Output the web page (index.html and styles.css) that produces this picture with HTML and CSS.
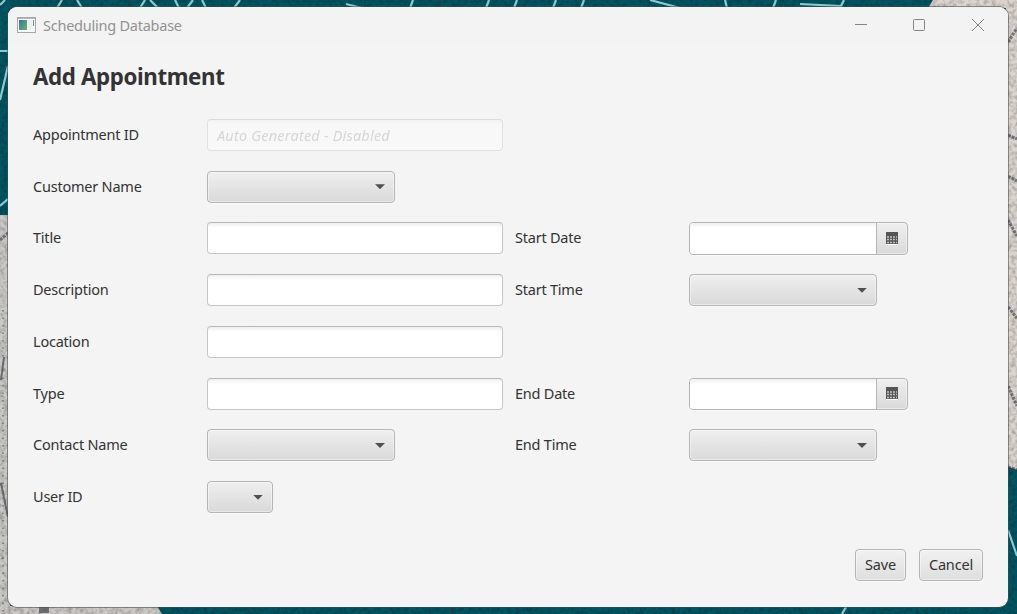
FILE: index.html
```html
<!DOCTYPE html>
<html lang="en">
<head>
<meta charset="utf-8">
<title>Scheduling Database</title>
<link rel="stylesheet" href="styles.css">
</head>
<body>
<svg class="wallpaper" viewBox="0 0 1017 614" aria-hidden="true">
  <defs>
    <filter id="grain" x="0" y="0" width="100%" height="100%">
      <feTurbulence type="fractalNoise" baseFrequency="0.25" numOctaves="3" seed="4" result="n"/>
      <feColorMatrix in="n" type="matrix" values="0 0 0 0 0  0 0 0 0 0  0 0 0 0 0  1.4 0.8 0 0 -0.9"/>
    </filter>
  </defs>
  <rect width="1017" height="614" fill="#005563"/>
  <path d="M0 215H10V614H0Z" fill="#cbc9c6"/>
  <path d="M0 606H157L162 614H0Z" fill="#cbc8c5"/>
  <path d="M933 0H1017V470L1006 466V8H928Z" fill="#dbd4cf"/>
  <rect width="1017" height="614" filter="url(#grain)" opacity=".3"/>
  <g fill="none" stroke="#8fc9cb" stroke-width="2.2">
    <path d="M0 51H8M8 66L0 100M8 199L0 206M5 0L0 5"/>
    <path d="M57 8L62 0M77 0L82 8M140 8L145 0M150 0L158 8M175 0L179 8M187 8L193 0M202 0L206 8M234 8L240 0"/>
    <path d="M346 4L362 8M410 8L413 0M486 8L489 0M514 8L517 0M553 8L556 0M581 8L584 0M650 0L680 8M725 0L727 8M773 8L776 0M800 4L841 6L844 0"/>
    <path d="M1008 530L1017 556M846 607L842 614"/>
  </g>
  <g fill="none" stroke="#303640" stroke-width="3" opacity=".6">
    <path d="M0 240L8 233M1008 42L1017 28M1008 135L1017 139M1008 176L1017 181M1008 220L1017 236M1008 307L1017 318M1008 386L1017 406M1008 467L1017 470" stroke-dasharray="3 1"/>
    <path d="M4 357L1 380M1 483L8 517M441 0L438 8M129 0L131 8M452 607V614" stroke-width="2"/>
    <path d="M39 610H49" stroke-width="6"/>
    <path d="M3 310V614" stroke-width="1.4" stroke-dasharray="1.5 6"/>
  </g>
</svg>

<div class="window">
  <header class="titlebar">
    <svg class="app-icon" width="19" height="16" viewBox="0 0 19 16">
      <defs>
        <linearGradient id="pane" x1="0" y1="0" x2="1" y2="1"><stop offset="0" stop-color="#3e73a0"/><stop offset="1" stop-color="#5dba6a"/></linearGradient>
      </defs>
      <rect x=".5" y=".5" width="18" height="15" fill="#fafafa" stroke="#a3a7b0"/>
      <path d="M1 1.5H18" stroke="#b2b6bf"/>
      <rect x="2" y="3" width="8" height="10" fill="url(#pane)"/>
      <rect x="11" y="3" width="4" height="10" fill="#eeeeee"/>
      <path d="M16 3H17V9H16Z" fill="#5a9c90"/>
    </svg>
    <span class="window-title">Scheduling Database</span>
    <svg class="window-controls" width="131" height="14" viewBox="0 0 131 14">
      <path d="M0 6.5H12"/>
      <rect x="58.5" y="1.5" width="11" height="11" rx="1"/>
      <path d="M117 1L129 13M129 1L117 13"/>
    </svg>
  </header>

  <main class="content">
    <h1 class="heading">Add Appointment</h1>
    <form class="form">
      <label class="c1 r1">Appointment ID</label>
      <input class="field disabled c2 r1" placeholder="Auto Generated - Disabled" disabled>
      <label class="c1 r2">Customer Name</label>
      <div class="combo c2 r2"><i class="arrow"></i></div>
      <label class="c1 r3">Title</label>
      <input class="field c2 r3">
      <label class="c3 r3">Start Date</label>
      <div class="date c4 r3"><input class="date-input"><span class="date-button"><svg class="calendar" width="12" height="13" viewBox="0 0 12 13"><path d="M0 12H12V13H0Z" fill="#fff"/><path d="M0 0H12V12H0Z" fill="#555"/><path d="M1 5H11M1 7.5H11M1 10.5H11" stroke="#c2c2c2" stroke-width="1.6" stroke-dasharray="2 1"/></svg></span></div>
      <label class="c1 r4">Description</label>
      <input class="field c2 r4">
      <label class="c3 r4">Start Time</label>
      <div class="combo c4 r4"><i class="arrow"></i></div>
      <label class="c1 r5">Location</label>
      <input class="field c2 r5">
      <label class="c1 r6">Type</label>
      <input class="field c2 r6">
      <label class="c3 r6">End Date</label>
      <div class="date c4 r6"><input class="date-input"><span class="date-button"><svg class="calendar" width="12" height="13" viewBox="0 0 12 13"><path d="M0 12H12V13H0Z" fill="#fff"/><path d="M0 0H12V12H0Z" fill="#555"/><path d="M1 5H11M1 7.5H11M1 10.5H11" stroke="#c2c2c2" stroke-width="1.6" stroke-dasharray="2 1"/></svg></span></div>
      <label class="c1 r7">Contact Name</label>
      <div class="combo c2 r7"><i class="arrow"></i></div>
      <label class="c3 r7">End Time</label>
      <div class="combo c4 r7"><i class="arrow"></i></div>
      <label class="c1 r8">User ID</label>
      <div class="combo small c2 r8"><i class="arrow"></i></div>
    </form>
    <footer class="actions">
      <button class="button save">Save</button>
      <button class="button cancel">Cancel</button>
    </footer>
  </main>
</div>
</body>
</html>
```

FILE: styles.css
```css
* { box-sizing: border-box; }
body {
  margin: 0;
  width: 1017px;
  height: 614px;
  overflow: hidden;
  padding: 7px 9px 7px 8px;
  font-family: "Noto Sans", "Open Sans", sans-serif;
  font-size: 14.5px;
  color: #333;
}
.wallpaper { position: absolute; left: 0; top: 0; width: 1017px; height: 614px; z-index: -1; }
.window {
  width: 1000px;
  height: 600px;
  background: #f4f4f4;
  border-radius: 9px;
  box-shadow: 0 0 0 1px rgba(70, 75, 75, .55);
  overflow: hidden;
  display: flex;
  flex-direction: column;
}
.titlebar {
  height: 37px;
  flex: none;
  background: #f3f3f3;
  display: flex;
  align-items: center;
  padding: 0 22px 0 9px;
}
.app-icon { display: block; margin-top: -1px; }
.window-title { margin: -2px 0 0 7px; color: #929292; letter-spacing: -.24px; white-space: nowrap; }
.window-controls { margin: -1px 0 0 auto; fill: none; stroke: #858585; stroke-width: 1; }
.content { flex: 1; display: flex; flex-direction: column; padding: 0 25px; }
.heading { margin: 17px 0 0; height: 32px; line-height: 32px; font-size: 22.3px; font-weight: 700; letter-spacing: -.37px; }
.form {
  margin: 25.9px 0 0;
  display: grid;
  grid-template-columns: 174px 308px 174px 219px;
  grid-template-rows: repeat(8, 32px);
  row-gap: 19.75px;
}
label { line-height: 31px; white-space: nowrap; letter-spacing: -.22px; }
.c1 { grid-column: 1; } .c2 { grid-column: 2; } .c3 { grid-column: 3; } .c4 { grid-column: 4; }
.r1 { grid-row: 1; } .r2 { grid-row: 2; } .r3 { grid-row: 3; } .r4 { grid-row: 4; }
.r5 { grid-row: 5; } .r6 { grid-row: 6; } .r7 { grid-row: 7; } .r8 { grid-row: 8; }
.field {
  width: 296px;
  height: 32px;
  border: 1px solid #c6c6c6;
  border-top-color: #b6b6b6;
  border-radius: 4px;
  padding: 0 9px;
  background: linear-gradient(#efefef, #fff 5px);
  font: inherit;
}
.disabled { opacity: .4; }
.disabled::placeholder { color: #aaa; font-style: italic; opacity: 1; letter-spacing: .2px; }
.combo, .button, .date {
  border: 1px solid #b5b5b5;
  border-radius: 4px;
  background: linear-gradient(#efefef, #d9d9d9);
  box-shadow: inset 0 0 0 1px rgba(255, 255, 255, .45), 0 1px 0 #fafafa;
}
.combo { width: 188px; height: 32px; display: flex; align-items: center; justify-content: flex-end; padding-right: 9px; }
.combo.small { width: 66px; }
.arrow { width: 10px; height: 5px; background: #505050; clip-path: polygon(0 0, 100% 0, 50% 100%); }
.date { width: 219px; height: 32.5px; display: flex; overflow: hidden; }
.date-input { width: 187px; height: 100%; border: 0; border-right: 1px solid #b5b5b5; padding: 0 9px; background: linear-gradient(#efefef, #fff 5px); font: inherit; }
.date-button { flex: 1; display: flex; align-items: center; justify-content: center; }
.calendar { display: block; }
.actions { display: flex; justify-content: flex-end; gap: 13px; margin-top: 36px; }
.button { height: 32px; padding: 0 0 2px; font: inherit; color: #333; letter-spacing: -.15px; background: linear-gradient(#f1f1f1, #dedede); }
.save { width: 51px; }
.cancel { width: 64px; }
```
